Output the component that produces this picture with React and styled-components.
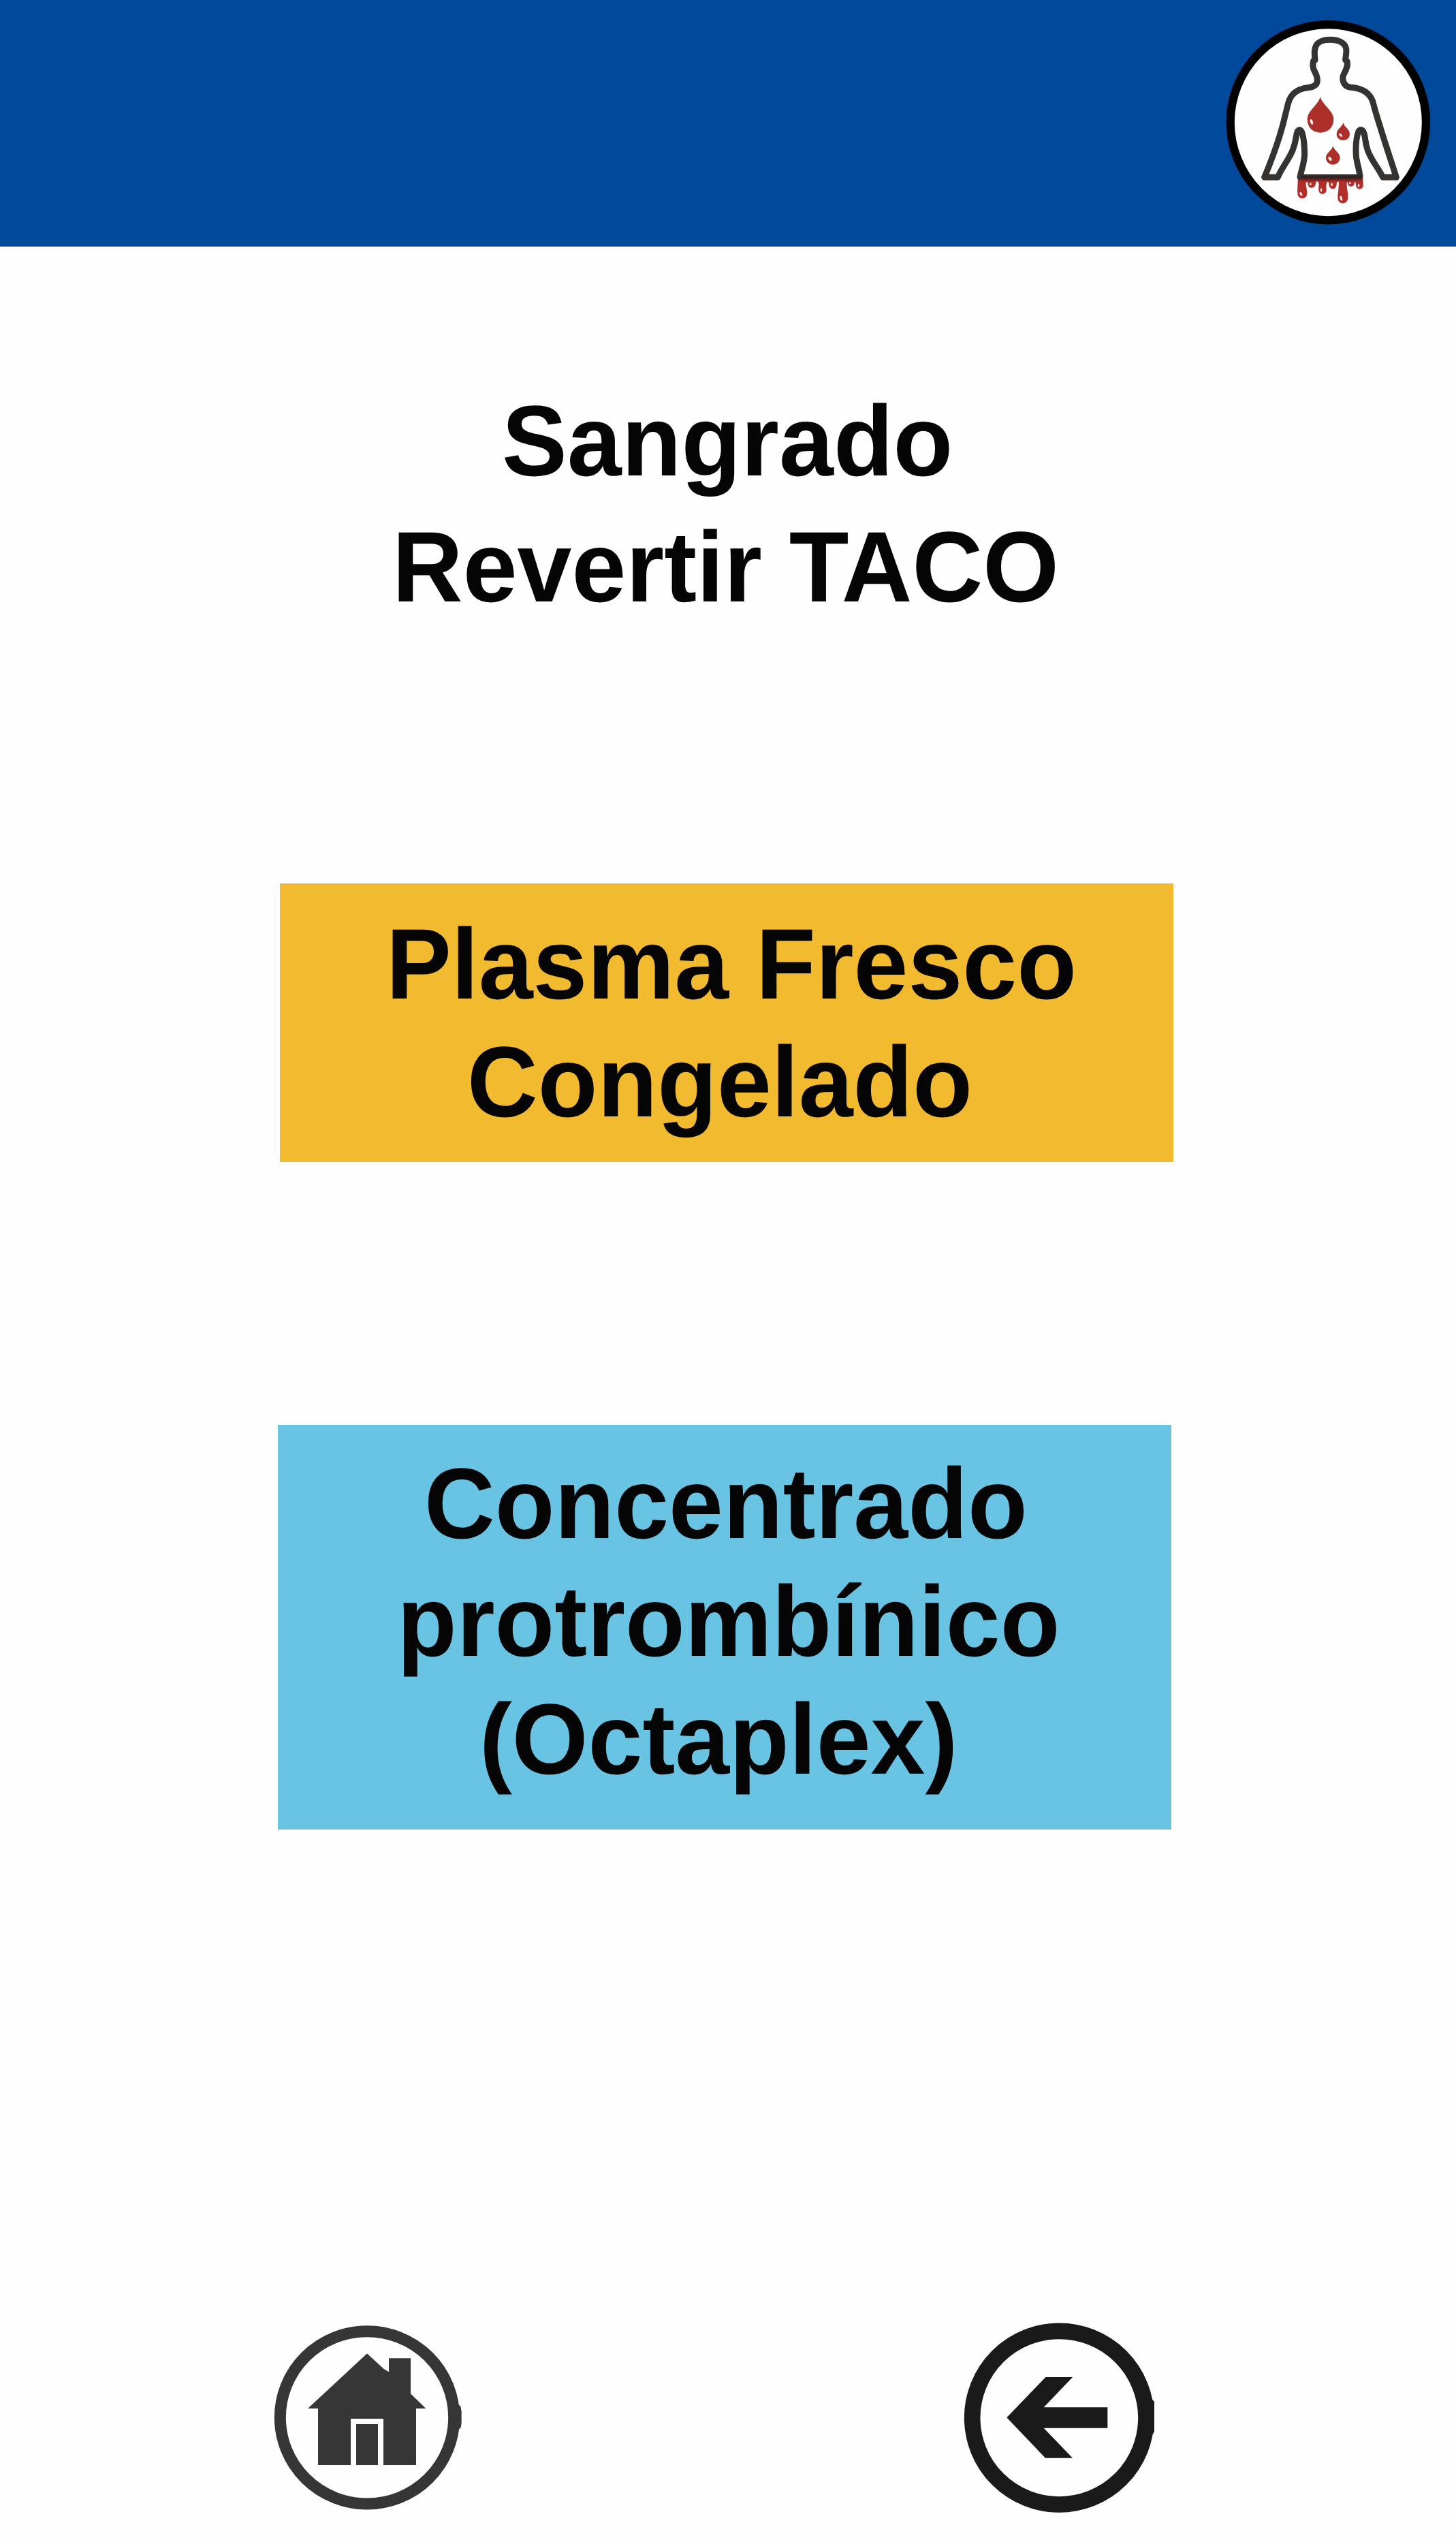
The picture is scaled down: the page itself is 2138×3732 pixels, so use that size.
import React from "react";
import styled, { createGlobalStyle } from "styled-components";

const Global = createGlobalStyle`
  * { box-sizing: border-box; }
  body { margin: 0; background: #fefefe; }
`;

const Page = styled.div`
  display: flex;
  flex-direction: column;
  width: 2138px;
  height: 3732px;
  background: #fefefe;
  color: #050505;
  font-family: "Liberation Sans", Arial, sans-serif;
  font-weight: 700;
  text-rendering: geometricPrecision;
`;

const Header = styled.header`
  display: flex;
  justify-content: flex-end;
  height: 362px;
  padding: 30px 38px 0 0;
  background: #004899;
`;

const Main = styled.main`
  display: flex;
  flex-direction: column;
  flex: 1;
`;

const Title = styled.h1`
  display: flex;
  flex-direction: column;
  align-items: flex-start;
  margin: 194px 0 0;
  height: 741px;
  font-size: 147px;
  line-height: 185px;
`;

/* Slightly condensed lettering, scaled from the left edge of each line. */
const Line = styled.span`
  display: block;
  margin-left: ${(p) => p.$indent}px;
  transform: scaleX(0.977);
  transform-origin: left center;
  white-space: nowrap;
`;

const Option = styled.button`
  display: flex;
  flex-direction: column;
  align-items: flex-start;
  width: 1312px;
  height: ${(p) => p.$height}px;
  margin: 0 0 ${(p) => p.$after}px ${(p) => p.$left}px;
  padding: ${(p) => p.$top}px 0 0;
  border: 0;
  background: ${(p) => p.$color};
  color: #050505;
  font: inherit;
  font-size: 147px;
  line-height: 173px;
  text-rendering: inherit;
`;

const Nav = styled.nav`
  display: flex;
  justify-content: space-between;
  align-items: flex-start;
  padding: 0 442px 0 402px;
`;

const NavButton = styled.button`
  display: flex;
  padding: 0;
  border: 0;
  background: none;
  margin-top: ${(p) => p.$top}px;
`;

const Drop = ({ d }) => <path d={d} fill="#ad2f29" />;

function BleedingLogo() {
  return (
    <svg width="300" height="300" viewBox="61 60 900 900" aria-label="Sangrado">
      <defs>
        <linearGradient id="waist" x1="0" y1="738" x2="0" y2="772" gradientUnits="userSpaceOnUse">
          <stop offset="0" stopColor="#33302f" />
          <stop offset="0.4" stopColor="#33201e" />
          <stop offset="1" stopColor="#b32d29" />
        </linearGradient>
      </defs>
      <circle cx="512" cy="509" r="431" fill="#fefefe" stroke="#000" strokeWidth="37" />
      <path d="M378 758 H666 V787 C664 810 637 807 634 788 Q634 772 628 770 C627 780 626 791 612 791 C598 790 599 779 597 770 Q593 776 594 784 C594 800 600 820 599 840 C598 875 553 873 554 840 C554 820 559 800 559 770 Q549 768 549 782 C548 792 544 802 532 802 C520 801 515 792 515 778 Q513 768 508 772 C500 784 505 795 504 807 C502 831 471 829 470 807 C468 790 475 780 467 770 Q457 766 457 778 C456 790 450 797 438 797 C426 797 422 788 422 774 Q414 768 414 780 C415 795 419 806 419 822 C418 852 377 850 377 822 C376 800 378 785 378 758Z" fill="#b32d29" />
      <g fill="none" stroke="#343332" strokeWidth="27" strokeLinejoin="round" strokeLinecap="round">
        <path d="M388 750 C394 714 408 690 408 646 C407 602 403 566 394 548 Q386 536 377 548 C369 564 373 588 356 630 C338 676 310 702 290 751 H231 C263 674 304 560 322 480 C337 423 337 400 367 376 C407 346 440 366 460 340 C471 319 458 294 448 276 Q442 254 447 238 L454 235 C454 220 449 204 454 184 C459 155 489 145 521 145 C553 145 585 156 591 184 C594 204 588 220 588 235 L595 240 C602 264 585 285 577 306 C574 333 585 352 612 355 C652 358 692 374 708 416 C728 498 785 665 812 751 H753 C732 708 700 674 686 632 C671 590 678 569 666 548 Q656 535 646 548 C635 575 633 622 635 656 C637 686 651 720 652 750" />
      </g>
      <rect x="392" y="738" width="266" height="31" fill="url(#waist)" />
      <Drop d="M477 396 C485 430 536 458 536 496 C535 534 510 554 478 554 C445 554 420 532 420 496 C420 458 470 430 477 396Z" />
      <Drop d="M578 510 C582 530 607 538 607 561 C606 579 593 588 578 588 C562 588 549 578 549 561 C549 538 574 529 578 510Z" />
      <Drop d="M533 611 C538 634 564 643 564 664 C563 684 549 695 533 695 C516 695 502 683 502 664 C502 643 529 634 533 611Z" />
      <g fill="#f7e9e8">
        <ellipse cx="439" cy="507" rx="6" ry="12" transform="rotate(-18 439 507)" />
        <ellipse cx="567" cy="565" rx="5" ry="9" transform="rotate(-45 567 565)" />
        <ellipse cx="520" cy="669" rx="6" ry="10" transform="rotate(-35 520 669)" />
        <ellipse cx="392" cy="824" rx="5" ry="9" transform="rotate(-25 392 824)" />
        <ellipse cx="434" cy="781" rx="4" ry="6" />
        <ellipse cx="481" cy="807" rx="4" ry="8" />
        <ellipse cx="528" cy="783" rx="4" ry="7" />
        <ellipse cx="569" cy="843" rx="5" ry="11" transform="rotate(-12 569 843)" />
        <ellipse cx="608" cy="776" rx="4" ry="5" />
        <ellipse cx="646" cy="787" rx="4" ry="7" />
      </g>
    </svg>
  );
}

function HomeIcon() {
  return (
    <svg width="277" height="272" viewBox="66 72 831 816" fill="#363636">
      <ellipse cx="477" cy="478" rx="383" ry="380" fill="none" stroke="#363636" strokeWidth="51" />
      <path d="M876 418 L889 428 L893 450 V500 L890 522 L876 534Z" />
      <path d="M477 196 L552 265 L573 277 V217 H669 V373 L736 438 H693 V687 H549 V483 H405 V687 H261 V438 H216Z" />
      <rect x="429" y="507" width="96" height="180" />
    </svg>
  );
}

function BackIcon() {
  return (
    <svg width="281" height="280" viewBox="45 60 843 840" fill="#1a1a1a">
      <ellipse cx="466" cy="479" rx="383" ry="382" fill="none" stroke="#1a1a1a" strokeWidth="71" />
      <path d="M872 395 L885 408 V540 L872 560Z" />
      <path d="M235 478 L406 300 H525 L398 433 H679 V524 H398 L525 656 H405Z" />
    </svg>
  );
}

export default function App() {
  return (
    <Page>
      <Global />
      <Header>
        <BleedingLogo />
      </Header>
      <Main>
        <Title>
          <Line $indent={736.5}>Sangrado</Line>
          <Line $indent={576}>Revertir TACO</Line>
        </Title>
        <Option $color="#f2ba2f" $left={411} $height={409} $top={33} $after={386}>
          <Line $indent={156}>Plasma Fresco</Line>
          <Line $indent={275}>Congelado</Line>
        </Option>
        <Option $color="#69c3e3" $left={408} $height={594} $top={30} $after={725}>
          <Line $indent={215}>Concentrado</Line>
          <Line $indent={175}>protrombínico</Line>
          <Line $indent={296}>(Octaplex)</Line>
        </Option>
        <Nav>
          <NavButton aria-label="Inicio" $top={3}>
            <HomeIcon />
          </NavButton>
          <NavButton aria-label="Volver" $top={-1}>
            <BackIcon />
          </NavButton>
        </Nav>
      </Main>
    </Page>
  );
}
